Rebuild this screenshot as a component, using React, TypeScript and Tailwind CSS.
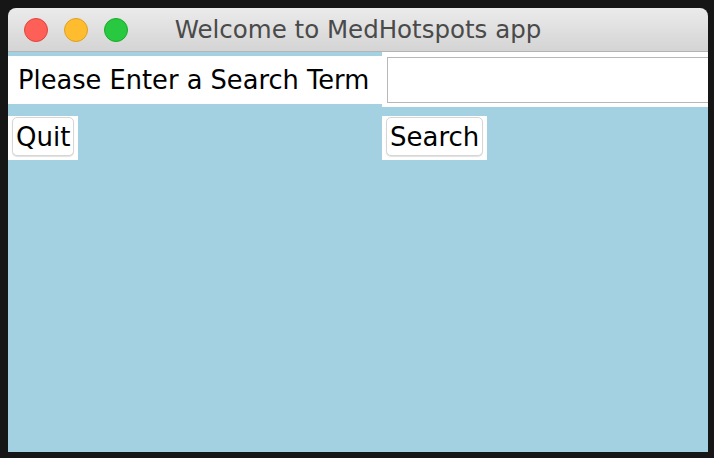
export default function App() {
  const font = { fontFamily: '"DejaVu Sans", Verdana, sans-serif' }

  return (
    <div className="w-[714px] h-[458px] bg-[#161616] pt-2 pl-2 pr-[6px] pb-[6px]" style={font}>
      <div className="w-[700px] h-[444px] flex flex-col rounded-t-[8px] overflow-hidden">
        {/* title bar */}
        <div className="h-[44px] shrink-0 relative flex items-center justify-center bg-gradient-to-b from-[#ebebeb] to-[#d4d4d4] border-b border-[#b4b4b4]">
          <div className="absolute left-4 top-[10px] flex gap-4">
            <span className="w-6 h-6 rounded-full bg-[#fe5f57] border border-[#e0443e]" />
            <span className="w-6 h-6 rounded-full bg-[#febc2e] border border-[#dea123]" />
            <span className="w-6 h-6 rounded-full bg-[#28c840] border border-[#1aab29]" />
          </div>
          <span className="text-[24.5px] text-[#4a4a4a] leading-none pt-[1px]">Welcome to MedHotspots app</span>
        </div>

        {/* content */}
        <div className="flex-1 bg-[#a3d1e1] grid grid-cols-[374px_1fr] content-start">
          <div className="mt-1 h-12 bg-white flex items-center pl-[10px] text-[25.7px] text-black">
            Please Enter a Search Term
          </div>
          <div className="h-[55px] bg-white pl-[5px] pt-[5px] pb-1 overflow-hidden">
            <div className="h-[46px] w-[400px] border border-[#b8b8b8] bg-white" />
          </div>

          <div className="mt-[9px]">
            <div className="inline-flex bg-white pl-1 pr-1 pt-[1px] pb-1">
              <button className="h-[39px] px-[3px] rounded-[5px] border border-[#d6d6d6] bg-white shadow-[0_1px_1px_rgba(0,0,0,0.12)] text-[26px] text-black leading-none">
                Quit
              </button>
            </div>
          </div>
          <div className="mt-[9px]">
            <div className="inline-flex bg-white pl-1 pr-1 pt-[1px] pb-1">
              <button className="h-[39px] px-[3px] rounded-[5px] border border-[#d6d6d6] bg-white shadow-[0_1px_1px_rgba(0,0,0,0.12)] text-[26px] text-black leading-none">
                Search
              </button>
            </div>
          </div>
        </div>
      </div>
    </div>
  )
}
